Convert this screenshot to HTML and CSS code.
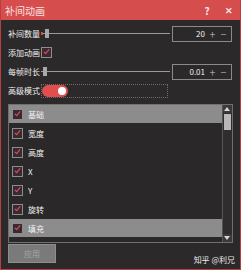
FILE: index.html
```html
<!DOCTYPE html>
<html lang="zh">
<head>
    <meta charset="UTF-8">
    <title>补间动画</title>
    <link rel="stylesheet" href="styles.css">
</head>
<body>
    <div class="window">
        <div class="titlebar">
            <span class="title">补间动画</span>
            <span class="tb-btn">?</span>
            <span class="tb-btn close">✕</span>
        </div>

        <div class="content">
            <div class="row">
                <span class="label">补间数量</span>
                <div class="slider"><span class="dot"></span><span class="thumb first"></span></div>
                <div class="spin"><span class="val">20</span><span class="pm">+</span><span class="pm">−</span></div>
            </div>

            <div class="row">
                <span class="label">添加动画</span>
                <span class="check"></span>
            </div>

            <div class="row">
                <span class="label">每帧时长</span>
                <div class="slider"><span class="thumb"></span></div>
                <div class="spin"><span class="val">0.01</span><span class="pm">+</span><span class="pm">−</span></div>
            </div>

            <div class="row">
                <span class="label">高级模式</span>
                <div class="focus-box">
                    <span class="toggle"><span class="knob"></span></span>
                </div>
            </div>

            <!-- 属性列表 -->
            <div class="list">
                <div class="items">
                    <div class="item sel"><span class="check"></span>基础</div>
                    <div class="item"><span class="check"></span>宽度</div>
                    <div class="item"><span class="check"></span>高度</div>
                    <div class="item"><span class="check"></span>X</div>
                    <div class="item"><span class="check"></span>Y</div>
                    <div class="item"><span class="check"></span>旋转</div>
                    <div class="item sel"><span class="check"></span>填充</div>
                </div>
                <div class="scrollbar">
                    <span class="arrow up"></span>
                    <span class="sb-thumb"></span>
                    <span class="sb-space"></span>
                    <span class="arrow down"></span>
                </div>
            </div>

            <div class="footer">
                <button class="apply" disabled>应用</button>
                <span class="watermark">知乎 @利兄</span>
            </div>
        </div>
    </div>
</body>
</html>
```

FILE: styles.css
```css
body {
    margin: 0;
    background: #2b292a;
    font-family: "Noto Sans CJK SC", "Noto Sans", sans-serif;
    color: #e6e6e6;
}

.window {
    width: 241px;
    height: 270px;
    box-sizing: border-box;
    border: 1px solid #b83f40;
    border-top: none;
    display: flex;
    flex-direction: column;
}

/* Barra de título */
.titlebar {
    height: 20px;
    background: #d64d4d;
    display: flex;
    align-items: center;
    padding: 0 6px 0 4px;
    color: #fbe3e3;
}

.title {
    font-size: 10px;
    flex: 1;
}

.tb-btn {
    font-size: 10px;
    font-weight: bold;
    width: 10px;
    text-align: center;
    margin-left: 12px;
}

.tb-btn.close {
    font-size: 9px;
}

.content {
    flex: 1;
    display: flex;
    flex-direction: column;
    padding: 4px 7px 0 7px;
}

.row {
    height: 19px;
    display: flex;
    align-items: center;
}

.label {
    font-size: 8px;
    width: 33px;
    color: #f0f0f0;
}

.slider {
    width: 129px;
    height: 9px;
    position: relative;
    display: flex;
    align-items: center;
}

.slider::before {
    content: "";
    position: absolute;
    left: 0;
    right: 0;
    top: 4px;
    height: 1px;
    background: #9a9a9a;
}

.dot {
    position: absolute;
    left: 0;
    top: 3px;
    width: 2px;
    height: 3px;
    background: #d44a4a;
}

.thumb {
    position: absolute;
    left: 2px;
    top: 0;
    width: 4px;
    height: 9px;
    background: #a8a8a8;
}

.thumb.first {
    left: 4px;
}

.spin {
    margin-left: 2px;
    width: 60px;
    height: 16px;
    box-sizing: border-box;
    border: 1px solid #8a8a8a;
    display: flex;
    align-items: center;
    justify-content: flex-end;
    padding-right: 2px;
    font-size: 8px;
    color: #f2f2f2;
}

.val {
    margin-right: 2px;
}

.pm {
    width: 11px;
    text-align: center;
    font-size: 11px;
    font-weight: 300;
    color: #c8c8c8;
}

.check {
    width: 11px;
    height: 11px;
    box-sizing: border-box;
    border: 1px solid #8d8d8d;
    background: #3a2a2e;
    position: relative;
    display: inline-block;
}

.check::after {
    content: "";
    position: absolute;
    left: 3px;
    top: 0px;
    width: 2px;
    height: 5px;
    border: solid #e05070;
    border-width: 0 1.5px 1.5px 0;
    transform: rotate(40deg);
}

.focus-box {
    width: 127px;
    height: 14px;
    box-sizing: border-box;
    border: 1px dotted #6e6e6e;
    display: flex;
    align-items: center;
}

.toggle {
    width: 26px;
    height: 12px;
    border-radius: 6px;
    background: #e04e4e;
    display: flex;
    align-items: center;
    justify-content: flex-end;
    padding-right: 2px;
    box-sizing: border-box;
}

.knob {
    width: 8px;
    height: 8px;
    border-radius: 50%;
    background: #fff;
}

/* Lista */
.list {
    margin-top: 4px;
    height: 139px;
    box-sizing: border-box;
    border: 1px solid #707070;
    background: #2a2828;
    display: flex;
}

.items {
    flex: 1;
}

.item {
    height: 19px;
    display: flex;
    align-items: center;
    padding-left: 3px;
    font-size: 8px;
    color: #f4f4f4;
    gap: 5px;
}

.item.sel {
    background: #8c8c8c;
    height: 18px;
    margin-bottom: 1px;
}

.scrollbar {
    width: 9px;
    display: flex;
    flex-direction: column;
    background: #2f2d2e;
    border-left: 1px solid #555;
}

.arrow {
    height: 8px;
    position: relative;
    background: #3a3a3a;
}

.arrow.up::after, .arrow.down::after {
    content: "";
    position: absolute;
    left: 1px;
    border-left: 3.5px solid transparent;
    border-right: 3.5px solid transparent;
}

.arrow.up::after {
    top: 2px;
    border-bottom: 4px solid #d8d8d8;
}

.arrow.down::after {
    top: 2px;
    border-top: 4px solid #d8d8d8;
}

.sb-thumb {
    height: 16px;
    background: #b8b8b8;
    margin: 1px 1px 0 1px;
}

.sb-space {
    flex: 1;
}

.footer {
    display: flex;
    align-items: flex-start;
    justify-content: space-between;
    padding-top: 1px;
}

.apply {
    width: 48px;
    height: 19px;
    background: #7a7a7a;
    border: 1px solid #8e8e8e;
    color: #a9a9a9;
    font-family: inherit;
    font-size: 8px;
    padding: 0;
}

.watermark {
    font-size: 8px;
    color: #e8e8e8;
    margin-top: 10px;
    margin-right: -2px;
}
```
